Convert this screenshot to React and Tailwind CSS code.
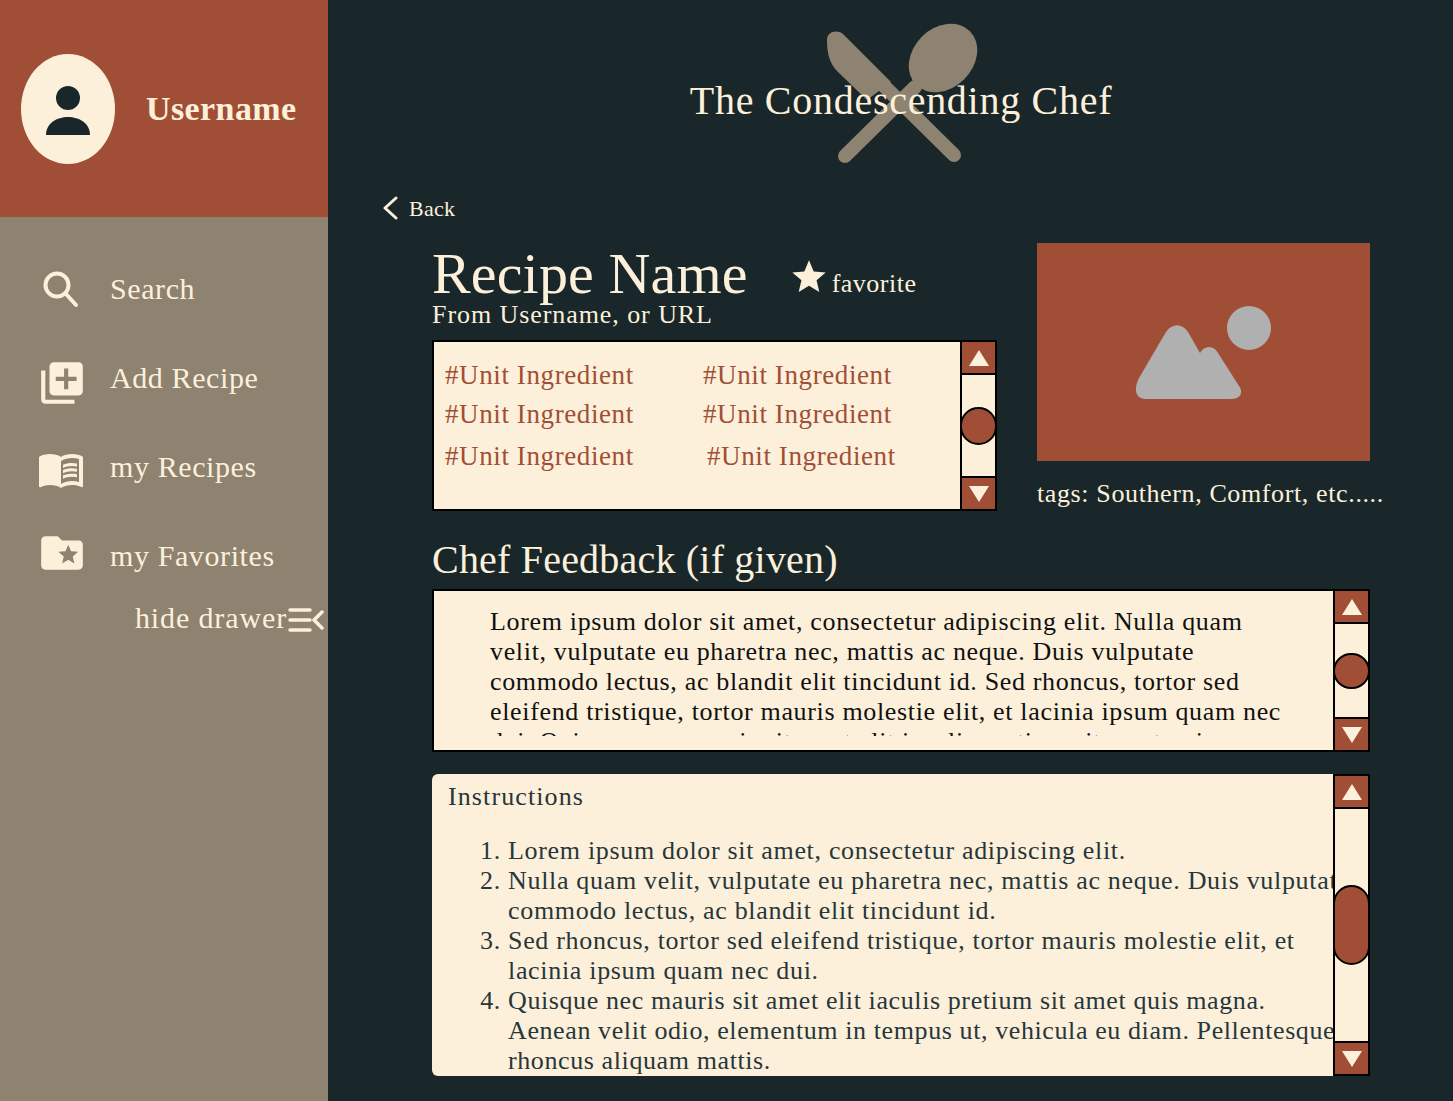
import React from 'react';
import { MdLibraryAdd, MdMenuBook, MdFolderSpecial, MdStar } from 'react-icons/md';

const ScrollBar = ({ thumb }) => (
    <div className="w-[37px] shrink-0 flex flex-col self-stretch border-2 border-black bg-[#fdf0da]">
        <div className="h-[31px] shrink-0 bg-[#a04f36] flex items-center justify-center">
            <div className="w-0 h-0 border-x-[10px] border-x-transparent border-b-[16px] border-b-[#fdf0da]"></div>
        </div>
        <div className="flex-1 border-y-2 border-black flex items-center justify-center">
            <div className={`w-[37px] shrink-0 bg-[#a04f36] border-2 border-black rounded-full ${thumb}`}></div>
        </div>
        <div className="h-[31px] shrink-0 bg-[#a04f36] flex items-center justify-center">
            <div className="w-0 h-0 border-x-[10px] border-x-transparent border-t-[16px] border-t-[#fdf0da]"></div>
        </div>
    </div>
);

const NavItem = ({ icon, label }) => (
    <div className="h-[89px] flex items-center">
        <div className="w-[110px] pl-[38px] shrink-0 flex items-center">{icon}</div>
        <span className="text-[30px] tracking-[0.6px] text-[#fdf0da]">{label}</span>
    </div>
);

const Logo = () => (
    <svg viewBox="820 20 165 150" className="absolute left-[492px] top-[20px] w-[165px] h-[150px]">
        <path d="M827 40C827 32 836 29 843 34L891 82L867 100L838 72C830 64 827 55 827 40Z" fill="#8e8270" />
        <line x1="880" y1="82" x2="954" y2="155" stroke="#8e8270" strokeWidth="14" strokeLinecap="round" />
        <ellipse cx="943" cy="58" rx="38" ry="30" transform="rotate(-45 943 58)" fill="#8e8270" />
        <line x1="915" y1="87" x2="845" y2="156" stroke="#8e8270" strokeWidth="14" strokeLinecap="round" />
    </svg>
);

const ingredients = [
    ['', ''],
    ['', ''],
    ['', 'pl-1'],
];

export default function App() {
    return (
        <div className="flex h-screen overflow-hidden bg-[#19272b] [font-family:'Liberation_Serif',serif]">
            {/* Drawer */}
            <aside className="w-[328px] shrink-0 bg-[#8e8270] flex flex-col">
                <div className="h-[217px] shrink-0 bg-[#a04f36] flex items-center pl-[21px]">
                    <div className="w-[94px] h-[110px] rounded-[50%] bg-[#fdf0da] flex items-center justify-center">
                        <svg viewBox="0 0 44 49" className="w-[44px] h-[49px] mt-[4px]">
                            <circle cx="22" cy="12" r="12" fill="#19272b" />
                            <path d="M0 49C0 37 11 31 22 31C33 31 44 37 44 49Z" fill="#19272b" />
                        </svg>
                    </div>
                    <span className="ml-[31px] text-[34px] font-bold tracking-[0.4px] text-[#fdf0da]">Username</span>
                </div>
                <nav className="pt-[27px]">
                    <NavItem
                        label="Search"
                        icon={
                            <svg viewBox="0 0 38 38" className="w-[38px] h-[38px] ml-[3px]" fill="none" stroke="#fdf0da" strokeWidth="4" strokeLinecap="round">
                                <circle cx="16" cy="15" r="11.5" />
                                <line x1="25" y1="24" x2="35" y2="35" />
                            </svg>
                        }
                    />
                    <NavItem label="Add Recipe" icon={<MdLibraryAdd className="w-[50px] h-[50px] -ml-[1px] translate-y-[5px] text-[#fdf0da]" />} />
                    <NavItem label="my Recipes" icon={<MdMenuBook className="w-[48px] h-[48px] -ml-[1px] translate-y-[2px] text-[#fdf0da]" />} />
                    <NavItem label="my Favorites" icon={<MdFolderSpecial className="w-[50px] h-[50px] -ml-[1px] -translate-y-[3px] text-[#fdf0da]" />} />
                </nav>
                <div className="flex items-center justify-end pr-[4px] -mt-[5px]">
                    <span className="text-[30px] tracking-[0.87px] text-[#fdf0da]">hide drawer</span>
                    <svg viewBox="0 0 36 26" className="w-[36px] h-[26px] ml-[1px] translate-y-[2px]" fill="none" stroke="#fdf0da" strokeWidth="3.5" strokeLinecap="round" strokeLinejoin="round">
                        <line x1="2" y1="3" x2="22" y2="3" />
                        <line x1="2" y1="13" x2="22" y2="13" />
                        <line x1="2" y1="23" x2="22" y2="23" />
                        <polyline points="34,5 26,13 34,21" />
                    </svg>
                </div>
            </aside>

            {/* Recipe page */}
            <main className="flex-1 min-w-0">
                <header className="relative h-[196px]">
                    <Logo />
                    <h1 className="relative pt-[78px] text-center pl-[21px] text-[40px] leading-[46px] tracking-[0.72px] text-[#fdf0da]">The Condescending Chef</h1>
                </header>

                <div className="h-[24px] pl-[54px] flex items-center text-[#fdf0da]">
                    <svg viewBox="0 0 16 24" className="w-[16px] h-[24px]" fill="none" stroke="#fdf0da" strokeWidth="3" strokeLinecap="round" strokeLinejoin="round">
                        <polyline points="14,2 3,12 14,22" />
                    </svg>
                    <span className="ml-[11px] text-[22px] tracking-[0.3px]">Back</span>
                </div>

                <div className="ml-[104px] w-[938px] pt-[24px]">
                    <div className="flex gap-[40px]">
                        <div className="w-[565px] shrink-0">
                            <div className="flex items-end h-[59px]">
                                <h2 className="text-[58px] leading-[59px] tracking-[0.15px] text-[#fdf0da]">Recipe Name</h2>
                                <MdStar className="ml-[41px] mb-[6px] w-[40px] h-[40px] text-[#fdf0da]" />
                                <span className="ml-[3px] mb-[2px] text-[26px] leading-[34px] tracking-[0.5px] text-[#fdf0da]">favorite</span>
                            </div>
                            <p className="text-[26px] leading-[24px] tracking-[0.93px] text-[#fdf0da]">From Username, or URL</p>
                            <div className="mt-[13px] h-[171px] flex border-2 border-black border-r-0 bg-[#fdf0da]">
                                <div className="flex-1 pl-[11px] pt-[18px] text-[27px] leading-[30px] tracking-[0.6px] text-[#a04f36]">
                                    {ingredients.map((row, i) => (
                                        <div key={i} className={`flex ${i === 2 ? 'mt-[12px]' : i === 1 ? 'mt-[9px]' : ''}`}>
                                            <span className="w-[258px]">#Unit Ingredient</span>
                                            <span className={row[1]}>#Unit Ingredient</span>
                                        </div>
                                    ))}
                                </div>
                                <div className="-my-[2px] flex">
                                    <ScrollBar thumb="h-[38px]" />
                                </div>
                            </div>
                        </div>
                        <div className="w-[333px] shrink-0">
                            <div className="h-[218px] -mt-[1px] bg-[#a04f36] flex items-center justify-center">
                                <svg viewBox="1130 300 145 105" className="w-[145px] h-[105px] -ml-[3px]">
                                    <circle cx="1249" cy="328" r="22" fill="#b0b0b0" />
                                    <path d="M1139 378L1166 332C1172 323 1182 323 1188 332L1200 353C1204 345 1214 345 1218 353L1239 386C1244 393 1240 399 1231 399L1146 399C1136 399 1133 390 1139 378Z" fill="#b0b0b0" />
                                </svg>
                            </div>
                            <p className="mt-[17px] whitespace-nowrap text-[26px] leading-[32px] tracking-[0.62px] text-[#fdf0da]">tags: Southern, Comfort, etc.....</p>
                        </div>
                    </div>

                    <h3 className="mt-[27px] text-[40px] leading-[44px] tracking-[0.2px] text-[#fdf0da]">Chef Feedback (if given)</h3>

                    <div className="mt-[7px] h-[163px] flex border-2 border-black border-r-0 bg-[#fdf0da]">
                        <div className="flex-1 min-w-0 h-[145px] overflow-hidden pl-[56px] pr-[44px] pt-[16px] text-[26px] leading-[30px] tracking-[0.66px] text-[#111]">
                            Lorem ipsum dolor sit amet, consectetur adipiscing elit. Nulla quam velit, vulputate eu pharetra nec, mattis ac neque. Duis vulputate commodo lectus, ac blandit elit tincidunt id. Sed rhoncus, tortor sed eleifend tristique, tortor mauris molestie elit, et lacinia ipsum quam nec dui. Quisque nec mauris sit amet elit iaculis pretium sit amet quis magna.
                        </div>
                        <div className="-my-[2px] flex">
                            <ScrollBar thumb="h-[36px]" />
                        </div>
                    </div>

                    <div className="mt-[22px] h-[302px] flex rounded-tl-[6px] rounded-bl-[6px] bg-[#fdf0da]">
                        <div className="flex-1 min-w-0 overflow-hidden text-[26px] leading-[30px] tracking-[0.68px] text-[#27363b]">
                            <p className="pl-[16px] pt-[8px] tracking-[1.1px]">Instructions</p>
                            <ol className="list-decimal mt-[24px] pl-[76px] w-[950px]">
                                <li>Lorem ipsum dolor sit amet, consectetur adipiscing elit.</li>
                                <li>
                                    <span className="whitespace-nowrap">Nulla quam velit, vulputate eu pharetra nec, mattis ac neque. Duis vulputate</span>
                                    <br />
                                    commodo lectus, ac blandit elit tincidunt id.
                                </li>
                                <li className="w-[810px]">Sed rhoncus, tortor sed eleifend tristique, tortor mauris molestie elit, et lacinia ipsum quam nec dui.</li>
                                <li className="tracking-[0.6px]">
                                    Quisque nec mauris sit amet elit iaculis pretium sit amet quis magna.
                                    <br />
                                    Aenean velit odio, elementum in tempus ut, vehicula eu diam. Pellentesque
                                    <br />
                                    rhoncus aliquam mattis.
                                </li>
                            </ol>
                        </div>
                        <ScrollBar thumb="h-[80px]" />
                    </div>
                </div>
            </main>
        </div>
    );
}
